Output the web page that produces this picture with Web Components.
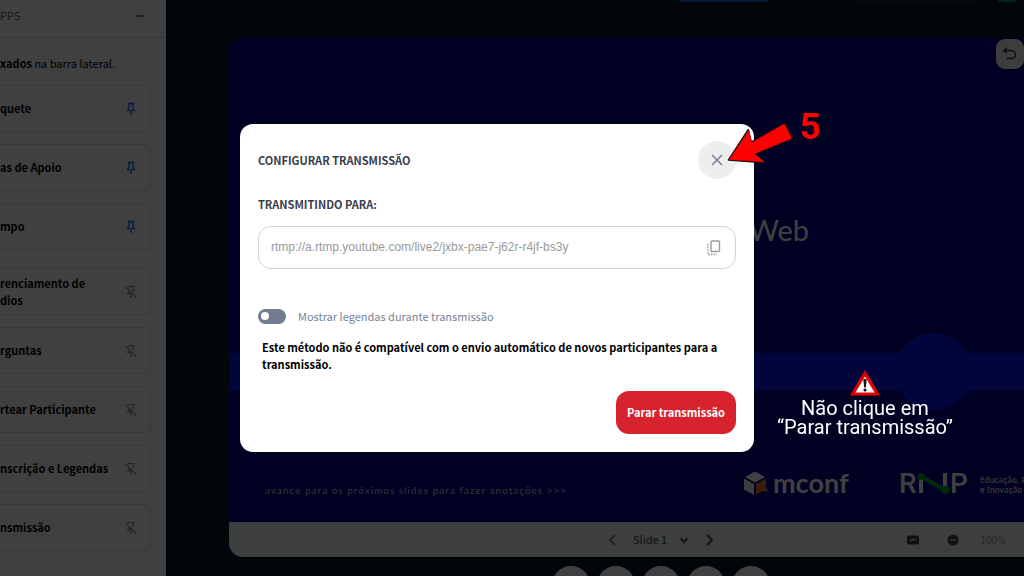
<!DOCTYPE html>
<html lang="pt-BR">
<head>
<meta charset="utf-8">
<meta name="viewport" content="width=device-width, initial-scale=1">
<title>Configurar transmissão</title>
<style>
  html, body { margin: 0; height: 100%; overflow: hidden; }
  body {
    background: #08182a;
    color: #000;
    font: 11px/17px "Noto Sans CJK SC", "Noto Sans", sans-serif;
  }
</style>
</head>
<body>
<app-shell>
  <apps-panel slot="panel" heading="PPS">
    <span slot="intro"><b>xados</b> na barra lateral.</span>
    <app-card slot="pinned" pinned>quete</app-card>
    <app-card slot="pinned" pinned>as de Apoio</app-card>
    <app-card slot="pinned" pinned>mpo</app-card>
    <app-card>renciamento de<br>dios</app-card>
    <app-card>rguntas</app-card>
    <app-card>rtear Participante</app-card>
    <app-card>nscrição e Legendas</app-card>
    <app-card>nsmissão</app-card>
  </apps-panel>
  <top-bar slot="top"></top-bar>
  <slide-deck slot="deck">
    <slide-page></slide-page>
    <deck-toolbar slot="toolbar"></deck-toolbar>
  </slide-deck>
  <action-bar slot="actions"></action-bar>
</app-shell>

<modal-layer>
  <stream-dialog heading="Configurar transmissão" url="rtmp://a.rtmp.youtube.com/live2/jxbx-pae7-j62r-r4jf-bs3y">
    <span slot="note">Este método não é compatível com o envio automático de novos participantes para a transmissão.</span>
    <step-arrow slot="overlay">5</step-arrow>
    <warning-note slot="overlay">Não clique em<br>“Parar transmissão”</warning-note>
  </stream-dialog>
</modal-layer>

<script>
  const define = (name, markup, setup) => {
    const template = document.createElement('template');
    template.innerHTML = markup;
    customElements.define(name, class extends HTMLElement {
      constructor() {
        super();
        this.attachShadow({ mode: 'open' }).append(template.content.cloneNode(true));
      }
      connectedCallback() {
        if (setup) setup(this, this.shadowRoot);
      }
    });
  };

  define('app-shell', `
    <style>
      :host { display: grid; grid-template-columns: 166px minmax(0, 1fr); height: 100vh; overflow: hidden; }
      main { display: flex; flex-direction: column; min-width: 0; min-height: 0; overflow: hidden; }
      .deck { flex: 1; min-height: 0; display: grid; margin: 0 -69px 0 63px; }
      .actions { margin: 0 -69px 0 63px; }
    </style>
    <slot name="panel"></slot>
    <main>
      <slot name="top"></slot>
      <div class="deck"><slot name="deck"></slot></div>
      <div class="actions"><slot name="actions"></slot></div>
    </main>`);

  define('apps-panel', `
    <style>
      :host { display: flex; flex-direction: column; background: #fff; overflow: hidden; white-space: nowrap; }
      header {
        display: flex; align-items: center; justify-content: space-between;
        height: 38px; padding: 0 21px 6px 0; box-sizing: border-box;
        border-bottom: 1px solid #d4d9de; color: #5f6c80;
      }
      h2 { margin: 0; font-size: 11px; font-weight: 400; line-height: 17px; }
      button { border: 0; background: none; padding: 4px 0; display: flex; color: #5f6c80; }
      p { margin: 0; padding: 17px 0 13px; line-height: 17px; }
      .group { display: grid; gap: 12px; padding-right: 15px; }
      .group + .group { margin-top: 18px; }
    </style>
    <header>
      <h2></h2>
      <button aria-label="Minimizar"><svg width="10" height="4" viewBox="0 0 10 4"><path d="M1 2h8" stroke="currentColor" stroke-width="1.6"/></svg></button>
    </header>
    <p><slot name="intro"></slot></p>
    <div class="group"><slot name="pinned"></slot></div>
    <div class="group"><slot></slot></div>`,
    (host, root) => { root.querySelector('h2').textContent = host.getAttribute('heading'); });

  define('app-card', `
    <style>
      :host {
        display: flex; align-items: center; justify-content: space-between;
        height: 47px; box-sizing: border-box; padding-right: 12px;
        border: 1px solid #d6dde2; border-left: 0; border-radius: 0 6px 6px 0;
        font-weight: 700; line-height: 17px;
      }
      button { border: 0; background: none; padding: 0; display: flex; color: #8a94a8; }
      .pin, :host([pinned]) .off { display: none; }
      :host([pinned]) .pin { display: block; }
      :host([pinned]) button { color: #1d74f0; }
    </style>
    <span><slot></slot></span>
    <button aria-label="Fixar">
      <svg class="pin" width="14" height="14" viewBox="0 0 14 14" fill="none" stroke="currentColor" stroke-width="1.4"><path d="M3.5 1.5h7M5 1.5v5L3.6 8.600h6.800L9 6.500v-5M7 8.600V13"/></svg>
      <svg class="off" width="14" height="14" viewBox="0 0 14 14" fill="none" stroke="currentColor" stroke-width="1.3"><path d="M4 1.600h6.500M9.300 1.600v5M5.300 5v1.500L3.800 8.600h5M7 8.600V13M1.300 1.600l11.200 11.200"/></svg>
    </button>`);

  define('top-bar', `
    <style>
      :host { display: flex; align-items: flex-start; height: 38px; flex: none; padding-left: 514px; box-sizing: border-box; }
      i { flex: none; }
      .tab { width: 88px; height: 2px; background: #1670d0; border-radius: 0 0 2px 2px; margin-right: 90px; }
      .pill { width: 120px; height: 3px; background: #1c2733; border-radius: 0 0 10px 10px; margin-right: 20px; }
      .user { width: 18px; height: 2px; background: #008f70; border-radius: 0 0 9px 9px; }
    </style>
    <i class="tab"></i><i class="pill"></i><i class="user"></i>`);

  define('slide-deck', `
    <style>
      :host { display: flex; flex-direction: column; border-radius: 14px; overflow: hidden; background: #00008a; min-height: 0; }
      ::slotted(slide-page) { flex: 1; min-height: 0; }
    </style>
    <slot></slot><slot name="toolbar"></slot>`);

  define('slide-page', `
    <style>
      :host { display: grid; grid-template-rows: minmax(0, 1fr) 37px 132px; position: relative; overflow: hidden; background: #00008a; color: #fff; }
      .title { padding: 174px 0 0 520px; font: 400 29px/36px Lato, sans-serif; }
      .band { display: flex; align-items: center; background: #0018f0; }
      .band i { flex: none; width: 77px; height: 77px; border-radius: 50%; background: #0018f0; margin-left: 666px; }
      footer { display: grid; grid-template-columns: 479px 155px 81px 1fr; align-items: start; padding: 80px 0 0 36px; white-space: nowrap; }
      .hint { padding-top: 14px; font: 400 10px/12px Lato, sans-serif; letter-spacing: 1px; color: #d0d0d8; }
      .mconf { display: flex; align-items: center; gap: 4px; font: 700 27px/26px Lato, sans-serif; }
      .rnp { overflow: visible; }
      .motto { padding-top: 5px; font: 600 8px/10px "Noto Sans", sans-serif; color: #d8d8e0; }
      .undo {
        position: absolute; top: 1px; left: 767px; width: 28px; height: 30px; padding: 0;
        border: 0; border-radius: 9px; background: #f4f4f4; color: #333;
        display: flex; align-items: center; justify-content: center;
      }
    </style>
    <div class="title">Web</div>
    <div class="band"><i></i></div>
    <footer>
      <span class="hint">avance para os próximos slides para fazer anotações &gt;&gt;&gt;</span>
      <span class="mconf">
        <svg width="25" height="26" viewBox="0 0 25 26"><path d="M11 1.500L21 7l-10 5.500L1 7z" fill="#fff"/><path d="M0 8.500l10 5.600V25L0 19.500z" fill="#f4f4f4"/><path d="M12 14.100L22 8.500v8l2.500 5-5.500-.5L12 25z" fill="#f07030"/></svg>
        mconf
      </span>
      <svg class="rnp" width="70" height="36" viewBox="0 0 70 36" role="img" aria-label="RNP">
        <g fill="#fff" font-family="Roboto, sans-serif" font-size="28" font-weight="500"><text x="0" y="23">R</text><text x="51" y="23">P</text></g>
        <path d="M22 8v15M46 3v16" stroke="#fff" stroke-width="4"/>
        <path d="M23 7l23 13" stroke="#00a838" stroke-width="4"/>
        <circle cx="22" cy="6.500" r="3.500" fill="#00a838"/><circle cx="46.500" cy="20" r="4" fill="#00a838"/>
      </svg>
      <span class="motto">Educação, P<br>e Inovação</span>
    </footer>
    <button class="undo" aria-label="Desfazer"><svg width="16" height="16" viewBox="0 0 16 16" fill="none" stroke="currentColor" stroke-width="1.500"><path d="M4.500 2L2 4.500 4.500 7M2 4.500h7.500a4 4 0 0 1 0 8H4.500"/></svg></button>`);

  define('deck-toolbar', `
    <style>
      :host { display: grid; grid-template-columns: 1fr auto 1fr; align-items: center; height: 35px; background: #f3f5f6; color: #3c4652; }
      button { border: 0; padding: 0; background: none; color: inherit; display: flex; }
      .nav { grid-column: 2; display: flex; align-items: center; gap: 16px; }
      .pick { display: flex; align-items: center; }
      select { appearance: none; border: 0; padding: 0; background: none; color: inherit; font: inherit; line-height: 17px; width: 46px; }
      .prev { color: #707880; }
      .tools { display: flex; align-items: center; justify-content: flex-end; padding-right: 87px; }
      .tools button { margin-right: 28px; }
      .tools button + button { margin-right: 21px; }
      .zoom { color: #999fa6; font-size: 10px; }
    </style>
    <div class="nav">
      <button class="prev" aria-label="Slide anterior"><svg width="10" height="14" viewBox="0 0 10 14" fill="none" stroke="currentColor" stroke-width="1.600"><path d="M8 2L3 7l5 5"/></svg></button>
      <label class="pick">
        <select aria-label="Slide"><option>Slide 1</option></select>
        <svg width="10" height="8" viewBox="0 0 10 8" fill="none" stroke="currentColor" stroke-width="1.800"><path d="M1.500 2.500L5 6l3.500-3.500"/></svg>
      </label>
      <button aria-label="Próximo slide"><svg width="10" height="14" viewBox="0 0 10 14" fill="none" stroke="currentColor" stroke-width="1.800"><path d="M2 2l5 5-5 5"/></svg></button>
    </div>
    <div class="tools">
      <button aria-label="Anotações"><svg width="12" height="10" viewBox="0 0 12 10"><rect width="12" height="9" y=".5" rx="1.500" fill="currentColor"/><path d="M3 4l1.500 2.500L6 3.500l1 2 2.500-2" fill="none" stroke="#f3f5f6"/></svg></button>
      <button aria-label="Reduzir"><svg width="12" height="12" viewBox="0 0 12 12"><circle cx="6" cy="6" r="5.500" fill="currentColor"/><path d="M3 6h6" stroke="#f3f5f6" stroke-width="1.200"/></svg></button>
      <span class="zoom">100%</span>
    </div>`);

  define('action-bar', `
    <style>
      :host { display: flex; justify-content: center; gap: 7px; height: 19px; padding-top: 9px; box-sizing: border-box; overflow: hidden; }
      button { width: 38px; height: 38px; flex: none; border: 0; border-radius: 50%; background: #fff; }
    </style>
    <button aria-label="Ações"></button><button aria-label="Microfone"></button><button aria-label="Câmera"></button><button aria-label="Compartilhar tela"></button><button aria-label="Reagir"></button>`);

  define('modal-layer', `
    <style>
      :host { position: fixed; inset: 0; display: grid; place-items: center; padding-right: 30px; background: rgba(0, 0, 0, .75); }
    </style>
    <slot></slot>`);

  define('stream-dialog', `
    <style>
      :host {
        display: block; position: relative; box-sizing: border-box; width: 100%; max-width: 514px;
        padding: 17px 18px 18px; border-radius: 13px; background: #fff; color: #383d4c;
      }
      header { display: flex; align-items: center; justify-content: space-between; }
      h1, .label { margin: 0; font-size: 11px; line-height: 17px; font-weight: 700; text-transform: uppercase; }
      .label { display: block; margin-top: 17px; }
      button { font: inherit; border: 0; padding: 0; display: flex; align-items: center; justify-content: center; }
      .close { width: 38px; height: 38px; border-radius: 50%; background: #eee; color: #76829a; }
      .field { display: flex; align-items: center; margin-top: 13px; height: 43px; box-sizing: border-box; padding: 0 14px 0 12px; border: 1px solid #ccd6e0; border-radius: 13px; }
      .field input { flex: 1; min-width: 0; border: 0; padding: 0; outline: 0; background: none; color: #999; font: 12px/17px "Liberation Sans", Arial, sans-serif; }
      .copy { background: none; color: #9a9a9a; }
      .toggle { display: flex; align-items: center; gap: 12px; margin-top: 39px; color: #76829a; line-height: 17px; }
      .toggle input { appearance: none; margin: 0; width: 28px; height: 15px; padding: 3px; box-sizing: border-box; border-radius: 8px; background: #717c91; }
      .toggle input::before { content: ""; display: block; width: 8px; height: 8px; border-radius: 50%; background: #fff; }
      .note { margin: 14px 4px 0; color: #000; font-weight: 700; line-height: 17px; }
      footer { display: flex; justify-content: flex-end; margin-top: 18px; }
      .stop { height: 43px; padding: 0 11px; border-radius: 13px; background: #d7232e; color: #fff; font-weight: 700; }
    </style>
    <header>
      <h1></h1>
      <button class="close" aria-label="Fechar"><svg width="12" height="12" viewBox="0 0 12 12" stroke="currentColor" stroke-width="1.500"><path d="M1 1l10 10M11 1L1 11"/></svg></button>
    </header>
    <label class="label" for="url">Transmitindo para:</label>
    <div class="field">
      <input id="url" type="text" readonly>
      <button class="copy" aria-label="Copiar"><svg width="14" height="16" viewBox="0 0 14 16" fill="none" stroke="currentColor" stroke-width="1.400"><rect x="4" y="1" width="8.500" height="10.500" rx="1"/><path d="M1 4v10.500h9" stroke-dasharray="1.500 1.200"/></svg></button>
    </div>
    <label class="toggle"><input type="checkbox" role="switch">Mostrar legendas durante transmissão</label>
    <p class="note"><slot name="note"></slot></p>
    <footer><button class="stop">Parar transmissão</button></footer>
    <slot name="overlay"></slot>`,
    (host, root) => {
      root.querySelector('h1').textContent = host.getAttribute('heading');
      root.querySelector('#url').value = host.getAttribute('url');
    });

  define('step-arrow', `
    <style>
      :host { position: absolute; top: -19px; right: -67px; display: flex; align-items: flex-start; gap: 6px; color: #f00; font: 700 37px/44px Roboto, sans-serif; }
      svg { margin-top: 13px; }
    </style>
    <svg width="68" height="46" viewBox="726 118 68 46">
      <path d="M728.500 160L748.300 129.500l3 12.500 33-19 7 15.800-37.400 15 10.300 9z" fill="#111" stroke="#111" stroke-width="1.400" stroke-linejoin="round"/>
      <path d="M729.500 159.500L748.800 130.500l2.500 12.500 33-19 7.400 14.300-37.700 15.500 10 8z" fill="#f00" stroke="#f00" stroke-width=".6"/>
    </svg>
    <span><slot></slot></span>`);

  define('warning-note', `
    <style>
      :host { position: absolute; top: 246px; left: calc(100% + 23px); display: flex; flex-direction: column; align-items: center; gap: 3px; color: #fff; text-align: center; white-space: nowrap; font: 400 20px/19px Roboto, sans-serif; }
    </style>
    <svg width="30" height="26" viewBox="0 0 30 26"><path d="M15 0l15 25.500H0z" fill="#e60000"/><path d="M15 6.500l9.500 16h-19z" fill="#fff"/><path d="M13.300 9.500q1.700-1.500 3.400 0l-.9 8h-1.600z" fill="#111"/><circle cx="15" cy="20" r="1.600" fill="#111"/></svg>
    <span><slot></slot></span>`);
</script>
</body>
</html>
